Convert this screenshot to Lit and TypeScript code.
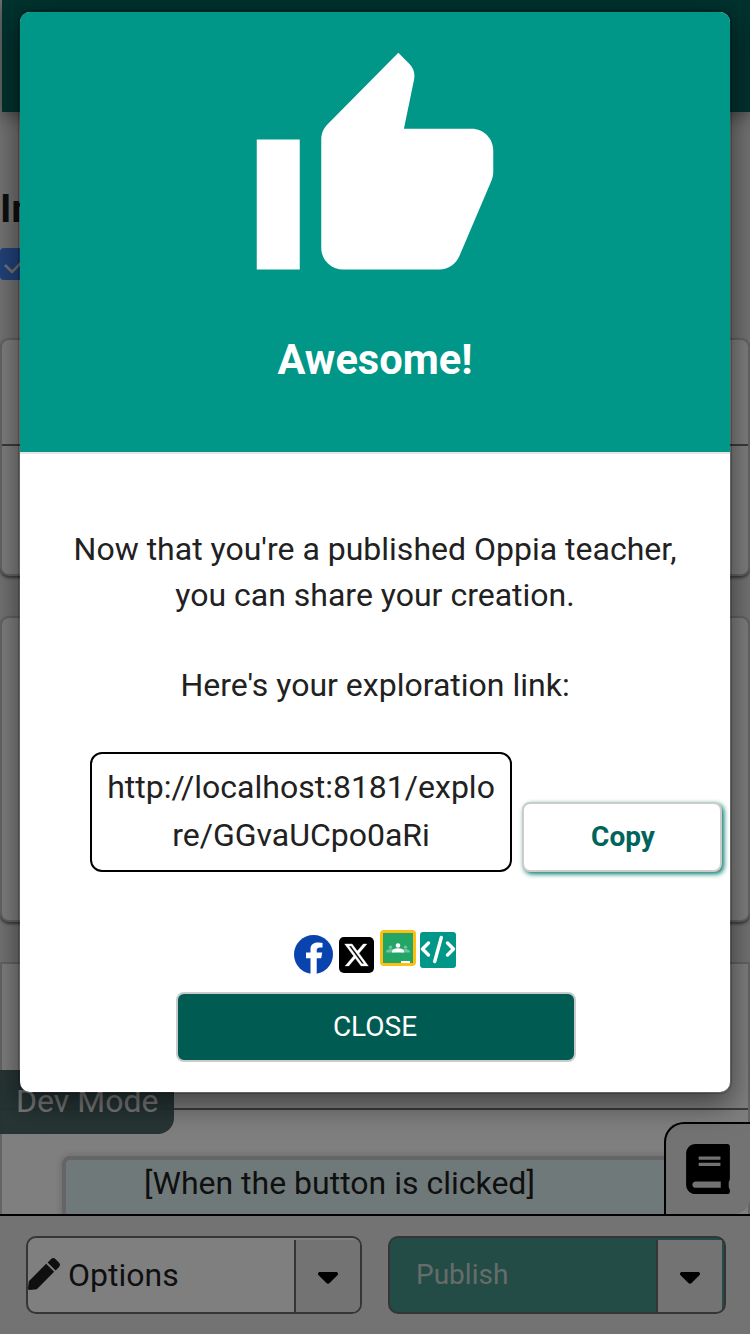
import { LitElement, html, css, svg } from "lit";
import { customElement } from "lit/decorators.js";

const caret = html`<svg class="caret" viewBox="0 0 20 12"><path d="M2 0h16c1.900 0 2.700 2 1.400 3.300l-7.800 7.800c-.9.900-2.300.9-3.200 0L.6 3.300C-.7 2 .1 0 2 0z" /></svg>`;

@customElement("editor-page")
class EditorPage extends LitElement {
  static styles = css`
    :host { display: flex; flex-direction: column; height: 1334px; background: #e6e6e6; position: relative; overflow: hidden; }
    * { box-sizing: border-box; }
    .nav { flex: none; height: 112px; margin-left: 2px; background: #00645c; box-shadow: 0 4px 16px rgba(0, 0, 0, 0.4); }
    .content { flex: 1; min-height: 0; overflow: hidden; padding-top: 76px; }
    .title { margin: 0; height: 44px; font-size: 39px; line-height: 43px; font-weight: 700; color: #1f1f1f; white-space: nowrap; }
    .check { display: flex; margin-top: 16px; width: 32px; height: 32px; border-radius: 4px; background: #4485f4; }
    .check svg { width: 24px; height: 32px; fill: none; stroke: #e6e6e6; stroke-width: 2.600; }
    .card { border: 2px solid #c8c8c8; border-radius: 9px; background: #fff; box-shadow: 0 2px 3px rgba(0, 0, 0, 0.5); }
    .first { margin-top: 58px; height: 238px; padding-top: 104px; }
    .second { margin-top: 40px; height: 306px; }
    .third { margin-top: 40px; height: 400px; border-radius: 0; box-shadow: none; padding-top: 144px; }
    .rule { height: 2px; background: #777; }
    .third .rule { margin-bottom: 46px; }
    .answer { margin-left: 60px; width: 626px; height: 100px; border: 4px solid #cacaca; border-radius: 8px; background: #e0f2f4; padding: 0 78px; font-size: 32px; line-height: 47px; color: #1f1f1f; white-space: nowrap; box-shadow: 0 0 8px rgba(0, 0, 0, 0.200); }
    .dev { position: absolute; left: 0; top: 1070px; width: 174px; height: 64px; padding-left: 16px; border-radius: 0 0 16px 0; background: rgba(72, 100, 100, 0.96); color: rgba(255, 255, 255, 0.94); font-size: 32px; line-height: 62px; white-space: nowrap; }
    .book { position: absolute; right: 0; top: 1122px; width: 86px; height: 92px; border: solid #000; border-width: 2px 0 0 2px; border-radius: 20px 0 16px 0; background: #e6e6e6; padding: 20px; }
    .book svg { display: block; width: 44px; height: 50px; }
    .footer { flex: none; height: 120px; border-top: 2px solid #000; padding: 20px 24px 20px 26px; display: flex; gap: 26px; }
    .btn { display: flex; height: 78px; border: 2px solid #6a6a6a; border-radius: 10px; background: #fff; overflow: hidden; align-items: center; }
    .options { width: 336px; font-size: 32px; color: #1f1f1f; }
    .options .label { flex: 1; padding-left: 8px; }
    .pencil { width: 32px; height: 32px; fill: #1f1f1f; margin-top: -2px; }
    .publish { width: 338px; background: #44998b; font-size: 28px; color: #ccd8d5; }
    .publish .label { flex: 1; padding: 0 0 2px 26px; }
    .drop { align-self: flex-end; width: 66px; height: 72px; border-left: 2px solid #6a6a6a; background: #e6e6e6; display: flex; align-items: center; justify-content: center; }
    .publish .drop { width: 66px; margin-right: 2px; }
    .caret { width: 20px; height: 12px; margin-top: 4px; }
  `;
  render() {
    return html`
      <div class="nav"></div>
      <div class="content">
        <h2 class="title">In</h2>
        <div class="check"><svg viewBox="0 0 24 32"><path d="M5 17l7 7L24 12" /></svg></div>
        <div class="card first"><div class="rule"></div></div>
        <div class="card second"></div>
        <div class="card third"><div class="rule"></div><div class="answer">[When the button is clicked]</div></div>
      </div>
      <div class="footer">
        <div class="btn options">
          <svg class="pencil" viewBox="0 0 512 512"><path d="M290.74 93.24l128.02 128.02-277.99 277.99-114.14 12.6C11.35 513.54-1.56 500.62.14 485.34l12.7-114.22 277.9-277.88zm207.2-19.06l-60.11-60.11c-18.75-18.75-49.16-18.75-67.91 0l-56.55 56.55 128.02 128.02 56.55-56.55c18.75-18.76 18.75-49.16 0-67.91z" /></svg>
          <span class="label">Options</span><span class="drop">${caret}</span>
        </div>
        <div class="btn publish"><span class="label">Publish</span><span class="drop">${caret}</span></div>
      </div>
      <div class="dev">Dev Mode</div>
      <div class="book"><svg viewBox="0 0 448 512"><path d="M448 360V24c0-13.3-10.7-24-24-24H96C43 0 0 43 0 96v320c0 53 43 96 96 96h328c13.3 0 24-10.7 24-24v-16c0-7.5-3.5-14.3-8.9-18.7-4.2-15.4-4.2-59.3 0-74.7 5.4-4.3 8.9-11.1 8.9-18.6zM128 134c0-3.3 2.7-6 6-6h212c3.3 0 6 2.7 6 6v20c0 3.3-2.7 6-6 6H134c-3.3 0-6-2.7-6-6v-20zm0 64c0-3.3 2.7-6 6-6h212c3.3 0 6 2.7 6 6v20c0 3.3-2.7 6-6 6H134c-3.3 0-6-2.7-6-6v-20zm227 250H96c-17.7 0-32-14.3-32-32 0-17.6 14.4-32 32-32h259z" /></svg></div>
    `;
  }
}

const person = (x: number, y: number, s: number, o: number) =>
  svg`<g transform="translate(${x} ${y}) scale(${s})" fill="#fff" fill-opacity=${o}><circle cx="0" cy="-4.500" r="2.300" /><path d="M-6 2.500V1.300C-6-1-2-1.700 0-1.700S6-1 6 1.300v1.200z" /></g>`;

@customElement("share-dialog")
class ShareDialog extends LitElement {
  static styles = css`
    :host { display: flex; flex-direction: column; box-sizing: border-box; width: 714px; height: 1084px; border: 2px solid rgba(0, 0, 0, 0.200); border-radius: 12px; background: #fff; background-clip: padding-box; box-shadow: 0 10px 30px rgba(0, 0, 0, 0.5); }
    * { box-sizing: border-box; }
    .head { height: 442px; padding-top: 30px; background: #009688; border-bottom: 2px solid #e5e5e5; border-radius: 10px 10px 0 0; display: flex; flex-direction: column; align-items: center; color: #fff; }
    .thumb { width: 258px; height: 260px; fill: #fff; }
    .head h1 { margin: 33px 0 0; font-size: 41.600px; line-height: 50px; font-weight: 700; }
    .body { padding-top: 72px; text-align: center; font-size: 32px; line-height: 46px; color: #212121; }
    .body p { margin: 0; }
    .lead { height: 136px; }
    .linkrow { display: flex; align-items: flex-end; margin: 44px 0 0 70px; gap: 10px; height: 120px; }
    .url { width: 422px; height: 120px; border: 2px solid #000; border-radius: 12px; padding: 9px 12px; line-height: 48px; word-break: break-all; }
    .copy { width: 200px; height: 70px; border: 2px solid #ccc; border-radius: 8px; padding-left: 2px; background: #fff; color: #00645c; font-size: 28px; font-weight: 700; line-height: 65px; box-shadow: 2px 2px 5px #00796b; }
    .icons { display: flex; margin: 58px 0 0 274px; height: 46px; align-items: flex-start; }
    .fb { width: 39px; height: 39px; margin-top: 5px; }
    .x { width: 35px; height: 36px; margin: 7px 0 0 6px; }
    .room { width: 36px; height: 36px; margin-left: 6px; }
    .embed { width: 36px; height: 36px; margin: 2px 0 0 4px; }
    .close { margin: 16px 0 0 156px; width: 400px; height: 70px; border: 2px solid #c7cccb; border-radius: 8px; padding-right: 2px; background: #005c52; color: #fff; font-size: 28px; line-height: 65px; }
  `;
  render() {
    return html`
      <div class="head">
        <svg class="thumb" viewBox="0 0 24 24" preserveAspectRatio="none"><path d="M1 21h4V9H1v12zm22-11c0-1.100-.9-2-2-2h-6.310l.95-4.570.03-.32c0-.41-.17-.79-.44-1.060L14.170 1 7.590 7.590C7.220 7.950 7 8.450 7 9v10c0 1.100.9 2 2 2h9c.83 0 1.540-.5 1.840-1.220l3.020-7.050c.09-.23.14-.47.14-.73v-2z" /></svg>
        <h1>Awesome!</h1>
      </div>
      <div class="body">
        <p class="lead">Now that you're a published Oppia teacher,<br />you can share your creation.</p>
        <p>Here's your exploration link:</p>
        <div class="linkrow"><div class="url">http://localhost:8181/explore/GGvaUCpo0aRi</div><div class="copy">Copy</div></div>
        <div class="icons">
          <svg class="fb" viewBox="0 0 39 39"><circle cx="19.500" cy="19.500" r="19.500" fill="#0843ae" /><path fill="#fff" d="M16.500 39V23.300H12V17.400h4.500v-3.200c0-4.500 3-6.700 7-6.700 2 0 4 .3 5 .5V12.500h-2.500c-2.500 0-3.300 1.400-3.300 3v1.900H28.200l-1 5.900h-4.500V39z" /></svg>
          <svg class="x" viewBox="0 0 36 36" preserveAspectRatio="none"><rect width="36" height="36" rx="5" /><path transform="translate(4.400 4.400) scale(1.130)" fill="#fff" stroke="#fff" stroke-width="0.300" d="M18.244 2.250h3.308l-7.227 8.260 8.502 11.240H16.170l-5.214-6.817L4.990 21.750H1.680l7.730-8.835L1.254 2.250H8.080l4.713 6.231zm-1.161 17.520h1.833L7.084 4.126H5.117z" /></svg>
          <svg class="room" viewBox="0 0 36 36"><rect width="36" height="36" rx="4" fill="#ffbf12" /><path fill="#23a566" d="M3 3h30v30H3z" />${person(10.500, 20.500, 0.75, 0.35)}${person(25.500, 20.500, 0.75, 0.35)}${person(18, 20, 1, 1)}<path fill="#fff" d="M21 31h9v2h-9z" /></svg>
          <svg class="embed" viewBox="0 0 36 36"><rect width="36" height="36" rx="3" fill="#009688" /><path d="M8.500 11l-6 6 6 6M27.500 11l6 6-6 6M21.300 5.500l-6.600 24" fill="none" stroke="#fff" stroke-width="3.400" stroke-linecap="round" stroke-linejoin="round" /></svg>
        </div>
        <div class="close">CLOSE</div>
      </div>
    `;
  }
}

@customElement("app-root")
class AppRoot extends LitElement {
  static styles = css`
    :host { display: block; position: relative; width: 750px; height: 1334px; overflow: hidden; font-family: Roboto, "Liberation Sans", sans-serif; }
    .backdrop { position: absolute; inset: 0; background: rgba(0, 0, 0, 0.5); display: flex; justify-content: center; align-items: flex-start; padding-top: 10px; }
  `;
  render() {
    return html`<editor-page></editor-page><div class="backdrop"><share-dialog></share-dialog></div>`;
  }
}
